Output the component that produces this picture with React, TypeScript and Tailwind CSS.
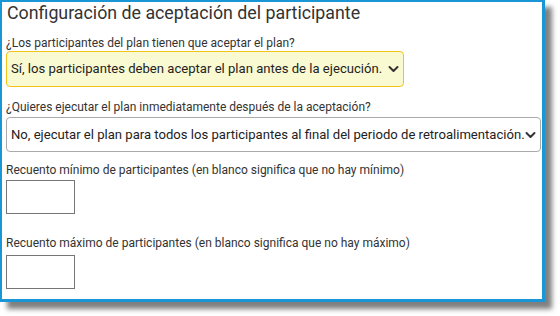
import React from 'react';

const Chevron = () => (
  <svg width="11" height="10" viewBox="0 0 11 10" className="shrink-0">
    <path d="M1.5 3 L5.5 7 L9.5 3" fill="none" stroke="#333" strokeWidth="2" strokeLinecap="round" strokeLinejoin="round" />
  </svg>
);

const Field: React.FC<{ label: string; children: React.ReactNode; className?: string }> = ({ label, children, className = '' }) => (
  <div className={`flex flex-col ${className}`}>
    <label className="text-[12px] leading-[14px] text-[#333] whitespace-nowrap">{label}</label>
    {children}
  </div>
);

export default function App() {
  return (
    <div className="w-[560px] h-[316px] bg-white" style={{ fontFamily: 'Roboto, "Liberation Sans", sans-serif' }}>
      <div className="w-[545px] h-[302px] border-[#1896d5] border-t-2 border-l-2 border-b-[3px] border-r-[3px] bg-white shadow-[7px_7px_5px_rgba(0,0,0,0.5)] pl-[4px] pr-[1px] flex flex-col">
        <h1 className="text-[17.8px] leading-[22px] text-[#333] pl-[1px] whitespace-nowrap">Configuración de aceptación del participante</h1>

        <Field label="¿Los participantes del plan tienen que aceptar el plan?" className="mt-[12px]">
          <div className="mt-[1px] w-[398px] h-[36px] rounded-[4px] border border-[#f0c419] bg-[#fafad2] flex items-center justify-between pl-[4px] pr-[4px]">
            <span className="text-[13.1px] text-[#222] whitespace-nowrap">Sí, los participantes deben aceptar el plan antes de la ejecución.</span>
            <Chevron />
          </div>
        </Field>

        <Field label="¿Quieres ejecutar el plan inmediatamente después de la aceptación?" className="mt-[13px]">
          <div className="mt-[3px] w-[535px] h-[35px] rounded-[4px] border border-[#aaa] bg-white flex items-center justify-between pl-[4px] pr-[4px]">
            <span className="text-[13.1px] text-[#222] whitespace-nowrap">No, ejecutar el plan para todos los participantes al final del periodo de retroalimentación.</span>
            <Chevron />
          </div>
        </Field>

        <Field label="Recuento mínimo de participantes (en blanco significa que no hay mínimo)" className="mt-[11px]">
          <div className="mt-[3px] w-[69px] h-[34px] border border-[#767676] bg-white" />
        </Field>

        <Field label="Recuento máximo de participantes (en blanco significa que no hay máximo)" className="mt-[22px]">
          <div className="mt-[5px] w-[69px] h-[34px] border border-[#767676] bg-white" />
        </Field>
      </div>
    </div>
  );
}
